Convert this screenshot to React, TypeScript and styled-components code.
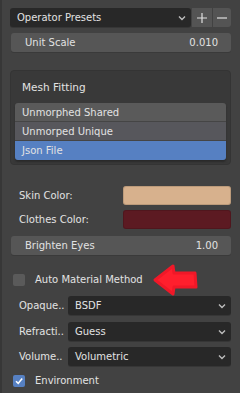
import styled, { createGlobalStyle } from "styled-components";

const GlobalStyle = createGlobalStyle`
  html, body {
    margin: 0;
    padding: 0;
    background: #424242;
  }
  body {
    font-family: "DejaVu Sans", "Liberation Sans", sans-serif;
    font-size: 10px;
    color: #e2e2e2;
  }
`;

const Page = styled.div`
  width: 240px;
  height: 393px;
  box-sizing: border-box;
  border-left: 2px solid #373737;
  padding: 8px 9px 0 8px;
  display: flex;
  flex-direction: column;
  overflow: hidden;
`;

const Row = styled.div<{ $top: number }>`
  display: flex;
  align-items: center;
  margin-top: ${(p) => p.$top}px;
  height: 19px;
`;

const Dropdown = styled.div`
  flex: 1;
  height: 19px;
  display: flex;
  align-items: center;
  justify-content: space-between;
  padding: 0 5px 0 7px;
  background: #282828;
  border-radius: 3px;
  box-sizing: border-box;
  box-shadow: 0 1px 0 #363636;
`;

const IconBtn = styled.div<{ $w: number }>`
  width: ${(p) => p.$w}px;
  height: 19px;
  margin-left: 1px;
  background: #545454;
  display: flex;
  align-items: center;
  justify-content: center;
  &:last-child {
    border-radius: 0 3px 3px 0;
  }
`;

const Slider = styled.div<{ $top: number }>`
  margin: ${(p) => p.$top}px 0 0 1px;
  height: 19px;
  background: #565656;
  border-radius: 3px;
  display: flex;
  align-items: center;
  justify-content: space-between;
  padding: 0 13px 0 14px;
  box-shadow: 0 1px 0 #3a3a3a;
`;

const Panel = styled.div`
  margin-top: 18px;
  background: #393939;
  border-radius: 4px;
  border: 1px solid #343434;
  padding: 0 4px 4px 4px;
`;

const PanelHeader = styled.div`
  height: 32px;
  display: flex;
  align-items: center;
  padding-left: 7px;
  font-size: 10.5px;
`;

const List = styled.div`
  display: flex;
  flex-direction: column;
  border-radius: 3px;
  overflow: hidden;
  box-shadow: 0 2px 2px #2a2a2a;
`;

const Item = styled.div<{ $bg: string; $h: number }>`
  height: ${(p) => p.$h}px;
  background: ${(p) => p.$bg};
  display: flex;
  align-items: center;
  padding-left: 7px;
  border-bottom: 1px solid #454545;
  &:last-child {
    border-bottom: none;
  }
`;

const PropRow = styled.div<{ $top: number }>`
  display: flex;
  align-items: center;
  margin-top: ${(p) => p.$top}px;
  height: 19px;
`;

const Label = styled.div<{ $w: number }>`
  width: ${(p) => p.$w}px;
  padding-left: 9px;
  box-sizing: border-box;
  flex-shrink: 0;
  white-space: nowrap;
`;

const Swatch = styled.div<{ $color: string }>`
  flex: 1;
  height: 19px;
  background: ${(p) => p.$color};
  border-radius: 3px;
  box-shadow: inset 0 0 0 1px rgba(0, 0, 0, 0.12);
`;

const CheckRow = styled.div<{ $top: number }>`
  display: flex;
  align-items: center;
  margin-top: ${(p) => p.$top}px;
  height: 17px;
  padding-left: 3px;
  position: relative;
`;

const Box = styled.div<{ $on?: boolean }>`
  width: 12px;
  height: 12px;
  border-radius: 2px;
  background: ${(p) => (p.$on ? "#5680c2" : "#5a5a5a")};
  margin-right: 10px;
  display: flex;
  align-items: center;
  justify-content: center;
`;

const Arrow = styled.svg`
  position: absolute;
  left: 134px;
  top: -9px;
`;

const Chevron = () => (
  <svg width="8" height="6" viewBox="0 0 8 6">
    <path d="M1 1.5 L4 4.5 L7 1.5" stroke="#bdbdbd" strokeWidth="1.4" fill="none" />
  </svg>
);

export default function App() {
  return (
    <>
      <GlobalStyle />
      <Page>
        <Row $top={0}>
          <Dropdown>
            <span>Operator Presets</span>
            <Chevron />
          </Dropdown>
          <IconBtn $w={20}>
            <svg width="10" height="10" viewBox="0 0 10 10">
              <path d="M5 0 V10 M0 5 H10" stroke="#e0e0e0" strokeWidth="1.2" />
            </svg>
          </IconBtn>
          <IconBtn $w={18}>
            <svg width="10" height="10" viewBox="0 0 10 10">
              <path d="M0 5 H10" stroke="#e0e0e0" strokeWidth="1.2" />
            </svg>
          </IconBtn>
        </Row>
        <Slider $top={6}>
          <span>Unit Scale</span>
          <span>0.010</span>
        </Slider>

        <Panel>
          <PanelHeader>Mesh Fitting</PanelHeader>
          <List>
            <Item $bg="#5a5a5a" $h={18}>Unmorphed Shared</Item>
            <Item $bg="#57575c" $h={18}>Unmorped Unique</Item>
            <Item $bg="#5680c2" $h={19}>Json File</Item>
          </List>
        </Panel>

        <PropRow $top={21}>
          <Label $w={113}>Skin Color:</Label>
          <Swatch $color="#d7b18d" />
        </PropRow>
        <PropRow $top={5}>
          <Label $w={113}>Clothes Color:</Label>
          <Swatch $color="#5c1a22" />
        </PropRow>
        <Slider $top={7}>
          <span>Brighten Eyes</span>
          <span>1.00</span>
        </Slider>

        <CheckRow $top={16}>
          <Box />
          <span>Auto Material Method</span>
          <Arrow width="56" height="36" viewBox="0 0 56 36">
            <path
              d="M11 18 L29 4 L30 11 L51 11 L52 25 L30 25 L29 32 Z"
              fill="#ff1f2d"
              stroke="#f01828"
              strokeWidth="3"
              strokeLinejoin="round"
            />
          </Arrow>
        </CheckRow>

        <PropRow $top={8}>
          <Label $w={58}>Opaque..</Label>
          <Dropdown>
            <span>BSDF</span>
            <Chevron />
          </Dropdown>
        </PropRow>
        <PropRow $top={7}>
          <Label $w={58}>Refracti..</Label>
          <Dropdown>
            <span>Guess</span>
            <Chevron />
          </Dropdown>
        </PropRow>
        <PropRow $top={6}>
          <Label $w={58}>Volume..</Label>
          <Dropdown>
            <span>Volumetric</span>
            <Chevron />
          </Dropdown>
        </PropRow>

        <CheckRow $top={6}>
          <Box $on>
            <svg width="10" height="10" viewBox="0 0 10 10">
              <path d="M2 5.2 L4.2 7.4 L8.2 2.6" stroke="#ffffff" strokeWidth="1.6" fill="none" />
            </svg>
          </Box>
          <span>Environment</span>
        </CheckRow>
      </Page>
    </>
  );
}
